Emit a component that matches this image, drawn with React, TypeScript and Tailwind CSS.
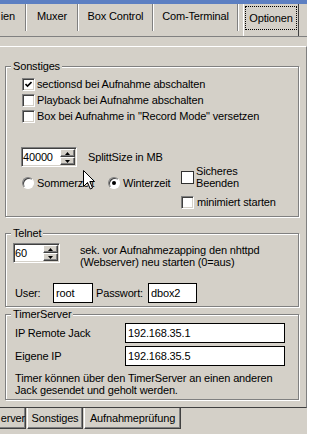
import clsx from "clsx";
import type { ReactNode } from "react";

// classic win32 3d edges
const sunken =
  "border border-t-[#808080] border-l-[#808080] border-r-white border-b-white shadow-[inset_1px_1px_0_#404040,inset_-1px_-1px_0_#d4d0c8]";
const raised =
  "border border-t-white border-l-white border-r-[#404040] border-b-[#404040] shadow-[inset_-1px_-1px_0_#808080]";

function Check({ checked, dark }: { checked?: boolean; dark?: boolean }) {
  return (
    <span
      className={clsx(
        "flex h-[13px] w-[13px] shrink-0 items-center justify-center bg-white",
        dark ? "border border-[#303030]" : sunken
      )}
    >
      {checked && (
        <svg width="7" height="7" viewBox="0 0 7 7">
          <polyline points="0.5,3 2.5,5 6.5,1" fill="none" stroke="#000" strokeWidth="1.6" />
        </svg>
      )}
    </span>
  );
}

function Radio({ checked }: { checked?: boolean }) {
  return (
    <span className="flex h-[12px] w-[12px] shrink-0 items-center justify-center rounded-full border border-t-[#808080] border-l-[#808080] border-r-white border-b-white bg-white shadow-[inset_1px_1px_0_#404040]">
      {checked && <span className="h-[4px] w-[4px] rounded-full bg-black" />}
    </span>
  );
}

function Arrow({ up }: { up?: boolean }) {
  return (
    <svg width="5" height="3" viewBox="0 0 5 3">
      <path d={up ? "M2.5 0 L5 3 L0 3 Z" : "M0 0 L5 0 L2.5 3 Z"} fill="#000" />
    </svg>
  );
}

function Spin({ value, className }: { value: string; className: string }) {
  return (
    <div className={clsx("flex h-[20px] shrink-0 bg-white p-[1px]", sunken, className)}>
      <span className="flex-1 leading-[16px]">{value}</span>
      <div className="flex w-[15px] flex-col">
        <span className={clsx("flex h-[8px] items-center justify-center bg-[#d4d0c8]", raised)}>
          <Arrow up />
        </span>
        <span className={clsx("flex h-[8px] items-center justify-center bg-[#d4d0c8]", raised)}>
          <Arrow />
        </span>
      </div>
    </div>
  );
}

function Field({ value, className }: { value: string; className: string }) {
  return (
    <div className={clsx("h-[20px] shrink-0 border border-black bg-white pl-[2px] leading-[18px]", className)}>
      {value}
    </div>
  );
}

function Group({ label, className, children }: { label: string; className: string; children: ReactNode }) {
  return (
    <div
      className={clsx(
        "relative ml-[5px] w-[294px] border border-[#808080] shadow-[inset_1px_1px_0_#fff,1px_1px_0_#fff]",
        className
      )}
    >
      <span className="absolute -top-[7px] left-[5px] bg-[#d4d0c8] px-[2px] leading-[13px]">{label}</span>
      {children}
    </div>
  );
}

function Sep() {
  return <div className="mb-[5px] w-[2px] border-l border-[#808080] bg-white" />;
}

export default function App() {
  return (
    <div className="h-[434px] w-[307px] overflow-hidden bg-[#d4d0c8] font-['Liberation_Sans',Arial,sans-serif] text-[11px] leading-[13px] tracking-[-0.15px] text-black">
      <div className="h-[4px] bg-[#5c7fc2]" />

      <div className="flex h-[33px] border-b border-[#808080]">
        <div className="flex w-[25px] items-center justify-end pb-[8px] pr-[10px]">ien</div>
        <Sep />
        <div className="flex w-[50px] items-center justify-center pb-[8px]">Muxer</div>
        <Sep />
        <div className="flex w-[73px] items-center justify-center pb-[8px]">Box Control</div>
        <Sep />
        <div className="flex w-[83px] items-center justify-center pb-[8px]">Com-Terminal</div>
        <Sep />
        <div className="ml-[4px] flex w-[56px] flex-col border-l border-r border-l-white border-r-[#404040] px-[1px] pb-[6px] pt-[2px]">
          <div className="flex flex-1 items-center justify-center border border-dotted border-black">Optionen</div>
        </div>
      </div>

      <div className="mt-[9px] h-[362px] border-b border-r border-t border-b-[#404040] border-r-[#808080] border-t-white pt-[19px]">
        <Group label="Sonstiges" className="h-[151px] pl-[15px] pt-[9px]">
          <div className="flex h-[16px] items-center gap-[2px] pl-[1px]">
            <Check checked />
            <span>sectionsd bei Aufnahme abschalten</span>
          </div>
          <div className="flex h-[16px] items-center gap-[2px] pl-[1px]">
            <Check />
            <span>Playback bei Aufnahme abschalten</span>
          </div>
          <div className="flex h-[16px] items-center gap-[2px] pl-[1px]">
            <Check />
            <span>Box bei Aufnahme in "Record Mode" versetzen</span>
          </div>

          <div className="mt-[23px] flex items-center gap-[11px]">
            <Spin className="w-[56px]" value="40000" />
            <span>SplittSize in MB</span>
          </div>

          <div className="mt-[3px] flex items-start">
            <div className="ml-[1px] flex h-[26px] w-[86px] items-center gap-[3px]">
              <Radio />
              <span>Sommerzeit</span>
            </div>
            <div className="flex h-[26px] w-[73px] items-center gap-[3px]">
              <Radio checked />
              <span>Winterzeit</span>
            </div>
            <div className="-mt-[5px] flex flex-col">
              <div className="flex items-center gap-[2px]">
                <Check dark />
                <span className="leading-[12px]">
                  Sicheres
                  <br />
                  Beenden
                </span>
              </div>
              <div className="mt-[7px] flex items-center gap-[3px]">
                <Check />
                <span>minimiert starten</span>
              </div>
            </div>
          </div>

          <svg className="absolute left-[77px] top-[103px]" width="12" height="20" viewBox="0 0 12 20">
            <path
              d="M0.5 0.5 L0.5 16.5 L4.5 12.5 L7.3 19 L9.5 18 L6.8 11.5 L11.5 11.5 Z"
              fill="#fff"
              stroke="#000"
              strokeWidth="1"
            />
          </svg>
        </Group>

        <Group label="Telnet" className="mt-[16px] h-[74px] pl-[7px] pt-[9px]">
          <div className="flex items-start">
            <Spin className="w-[47px]" value="60" />
            <div className="ml-[20px] mt-[1px] leading-[12px]">
              sek. vor Aufnahmezapping den nhttpd
              <br />
              (Webserver) neu starten (0=aus)
            </div>
          </div>
          <div className="mt-[15px] flex items-center">
            <span className="ml-[2px] w-[38px]">User:</span>
            <Field className="w-[40px]" value="root" />
            <span className="ml-[3px] w-[52px]">Passwort:</span>
            <Field className="w-[49px]" value="dbox2" />
          </div>
        </Group>

        <Group label="TimerServer" className="mt-[7px] h-[86px] pl-[9px] pt-[8px]">
          <div className="flex items-center">
            <span className="w-[110px]">IP Remote Jack</span>
            <Field className="w-[160px]" value="192.168.35.1" />
          </div>
          <div className="mt-[3px] flex items-center">
            <span className="w-[110px]">Eigene IP</span>
            <Field className="w-[160px]" value="192.168.35.5" />
          </div>
          <div className="mt-[6px] leading-[12px]">
            Timer können über den TimerServer an einen anderen
            <br />
            Jack gesendet und geholt werden.
          </div>
        </Group>
      </div>

      <div className="flex h-[21px]">
        <div className="flex w-[26px] items-center justify-end border-b border-r border-[#404040] shadow-[inset_-1px_-1px_0_#808080]">
          erver
        </div>
        <div className="ml-[1px] flex w-[56px] items-center justify-center border-b border-l border-r border-b-[#404040] border-l-white border-r-[#404040] shadow-[inset_-1px_-1px_0_#808080]">
          Sonstiges
        </div>
        <div className="ml-[1px] flex w-[97px] items-center justify-center border-b border-l border-r border-b-[#404040] border-l-white border-r-[#404040] shadow-[inset_-1px_-1px_0_#808080]">
          Aufnahmeprüfung
        </div>
      </div>
    </div>
  );
}
